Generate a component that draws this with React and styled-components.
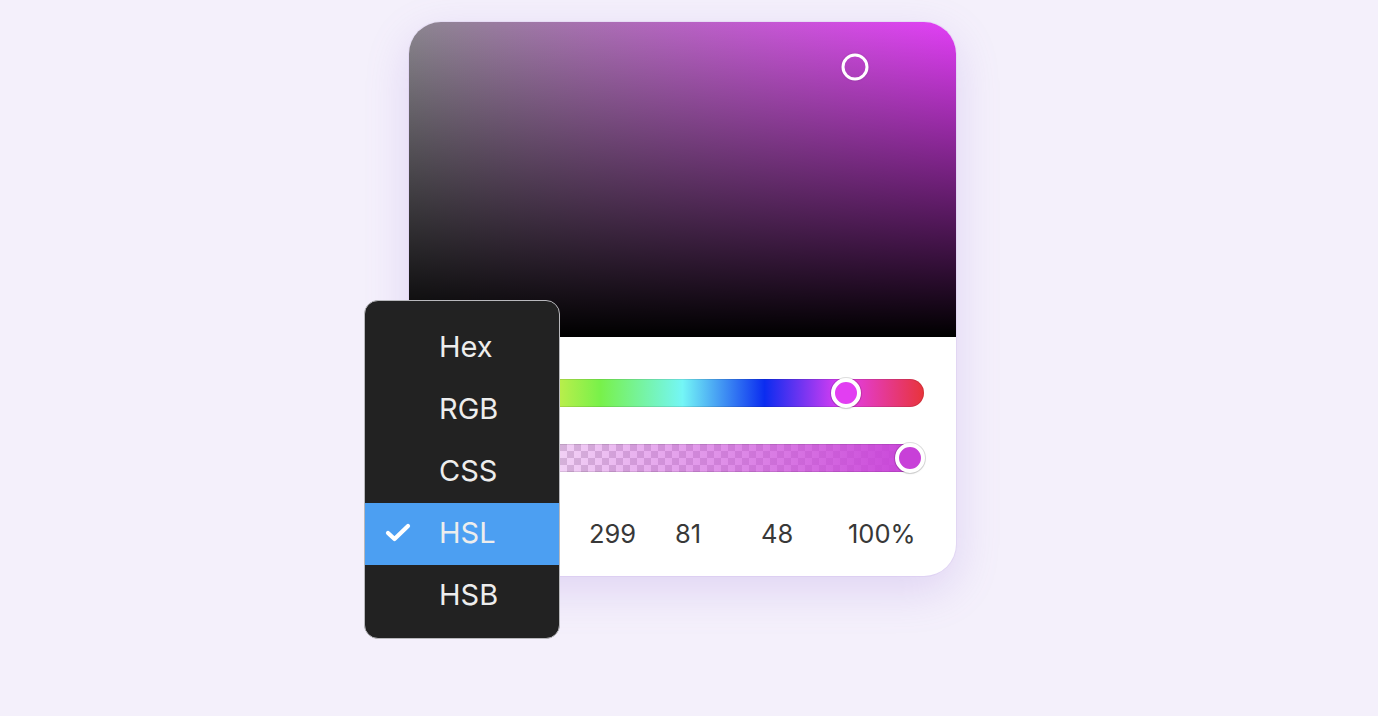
import React from "react";
import styled, { createGlobalStyle } from "styled-components";

const GlobalStyle = createGlobalStyle`
  html, body { margin: 0; padding: 0; }
  body {
    background: #f4f0fb;
    font-family: Inter, "Noto Sans", "Liberation Sans", sans-serif;
  }
  * { box-sizing: border-box; }
`;

const Page = styled.div`
  min-height: 716px;
  padding: 22px 0 0 409px;
`;

const Card = styled.div`
  position: relative;
  width: 547px;
  height: 554px;
  border-radius: 32px;
  background: #ffffff;
  box-shadow: 0 14px 44px rgba(150, 110, 220, 0.22), 0 0 0 1px rgba(170, 140, 220, 0.12);
`;

const ColorArea = styled.div`
  position: relative;
  height: 315px;
  border-radius: 32px 32px 0 0;
  background:
    linear-gradient(to bottom, rgba(0, 0, 0, 0) 0%, rgba(0, 0, 0, 1) 100%),
    linear-gradient(to right, #8c8790 0%, #e23ef6 100%);
`;

const AreaThumb = styled.div`
  position: absolute;
  width: 27px;
  height: 27px;
  border-radius: 50%;
  border: 3.5px solid #ffffff;
  transform: translate(-50%, -50%);
  box-shadow: 0 0 2px rgba(0, 0, 0, 0.2);
`;

const Controls = styled.div`
  display: flex;
  flex-direction: column;
  padding: 42px 32px 0 32px;
`;

const Track = styled.div`
  position: relative;
  height: 28px;
  border-radius: 14px;
  margin-bottom: ${(p) => p.$gap}px;
  background: ${(p) => p.$bg};
  box-shadow: inset 0 0 0 1px rgba(0, 0, 0, 0.1);
`;

const SliderThumb = styled.div`
  position: absolute;
  top: 50%;
  width: 30px;
  height: 30px;
  border-radius: 50%;
  border: 4px solid #ffffff;
  background: ${(p) => p.$color};
  transform: translate(-50%, -50%);
  box-shadow: 0 0 0 1px rgba(0, 0, 0, 0.13), 0 1px 2px rgba(0, 0, 0, 0.1);
`;

const ValuesRow = styled.div`
  display: flex;
  align-items: center;
  height: 40px;
`;

const FormatSpacer = styled.div`
  width: 148px;
  height: 40px;
`;

const ValueCell = styled.div`
  width: ${(p) => p.$w}px;
  font-size: 25.5px;
  color: #383838;
`;

const Menu = styled.div`
  position: absolute;
  left: -45px;
  top: 278px;
  width: 196px;
  padding: 16px 0 11px;
  border-radius: 14px;
  background: #222222;
  border: 1px solid #b8b8bc;
  overflow: hidden;
`;

const MenuItem = styled.div`
  display: grid;
  grid-template-columns: 74px 1fr;
  align-items: center;
  height: 62px;
  padding-bottom: 3px;
  background: ${(p) => (p.$active ? "#4c9ff2" : "transparent")};
  color: #ededed;
  font-size: 29px;
`;

const CheckSlot = styled.div`
  display: flex;
  align-items: center;
  padding-left: 20px;
`;

const Check = () => (
  <svg width="26" height="19" viewBox="0 0 26 19" fill="none">
    <path d="M3 10 L9.5 16 L23 3" stroke="#fff" strokeWidth="4.2" strokeLinecap="round" strokeLinejoin="round" />
  </svg>
);

const hueGradient =
  "linear-gradient(to right, #e8342e 0%, #f3ec4c 17%, #78f14a 33%, #74f6f6 50%, #0b2cf0 67%, #e23ef2 83%, #e8343a 100%)";
const alphaBg =
  "linear-gradient(to right, rgba(200, 64, 216, 0) 0%, rgba(200, 64, 216, 1) 100%), repeating-conic-gradient(#d9d6da 0% 25%, #ffffff 0% 50%) 0 0 / 14px 14px";

const formats = ["Hex", "RGB", "CSS", "HSL", "HSB"];

export default function App() {
  return (
    <>
      <GlobalStyle />
      <Page>
        <Card>
          <ColorArea>
            <AreaThumb style={{ left: 446, top: 45 }} />
          </ColorArea>
          <Controls>
            <Track $bg={hueGradient} $gap={37}>
              <SliderThumb $color="#e23ef2" style={{ left: `${(299 / 360) * 100 + 0.7}%` }} />
            </Track>
            <Track $bg={alphaBg} $gap={41}>
              <SliderThumb $color="#c840d8" style={{ left: "97%" }} />
            </Track>
            <ValuesRow>
              <FormatSpacer />
              <ValueCell $w={86}>299</ValueCell>
              <ValueCell $w={86}>81</ValueCell>
              <ValueCell $w={87}>48</ValueCell>
              <ValueCell $w={70}>100%</ValueCell>
            </ValuesRow>
          </Controls>
          <Menu>
            {formats.map((f) => (
              <MenuItem key={f} $active={f === "HSL"}>
                <CheckSlot>{f === "HSL" && <Check />}</CheckSlot>
                <span>{f}</span>
              </MenuItem>
            ))}
          </Menu>
        </Card>
      </Page>
    </>
  );
}
